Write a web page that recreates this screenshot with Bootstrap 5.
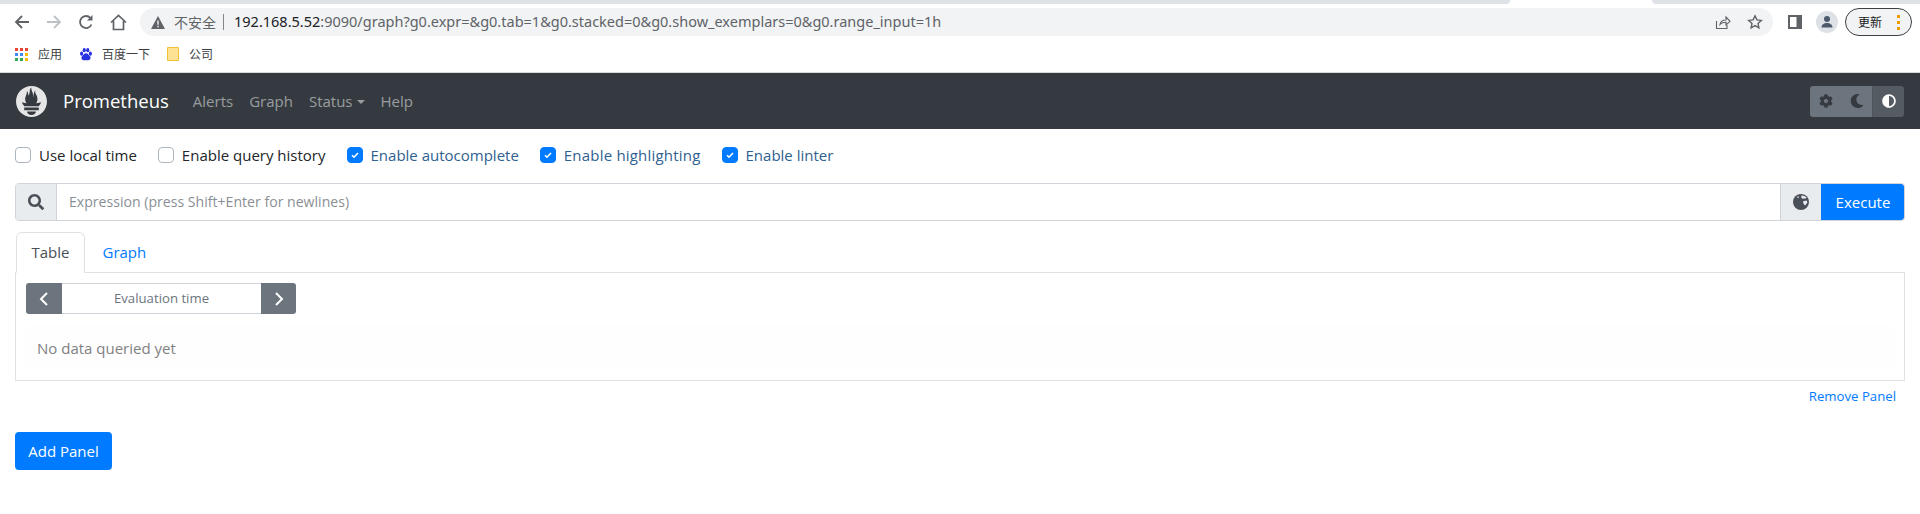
<!DOCTYPE html>
<html lang="zh-CN">
<head>
<meta charset="utf-8">
<title>Prometheus Time Series Collection and Processing Server</title>
<link href="https://cdn.jsdelivr.net/npm/bootstrap@5.3.0/dist/css/bootstrap.min.css" rel="stylesheet">
<style>
html,body{height:100%;}
body{font-family:"Open Sans","Noto Sans CJK SC",sans-serif;font-size:15px;color:#212529;background:#fff;overflow:hidden;}
.tabstrip{height:4px;background:#fff;}
.strip-left{width:1510px;background:#dee1e6;border-bottom-right-radius:4px;}
.strip-right{margin-left:142px;flex:1;background:#dee1e6;border-bottom-left-radius:4px;}
.toolbar{height:36px;padding:0 8px 0 6px;}
.tool-btn{width:32px;height:28px;flex:none;color:#5f6368;}
.omnibox{height:28px;width:1633px;background:#f1f3f4;border-radius:14px;margin-left:6px;flex:none;font-family:"Noto Sans","Noto Sans CJK SC",sans-serif;font-size:14.5px;color:#5f6368;padding:0 10px 0 11px;}
.omni-sep{width:1px;height:16px;background:#80868b;margin:0 10px 0 7px;}
.omni-host{color:#202124;}
.omni-warn{font-size:14px;margin-left:9px;font-family:"Noto Sans CJK SC",sans-serif;}
.update-pill{width:67px;height:28px;border:1px solid #3c4043;border-radius:14px;background:#f1f3f4;font-size:12px;font-family:"Noto Sans CJK SC",sans-serif;color:#202124;padding:0 11px 0 12px;margin-left:7px;}
.pill-dots{width:3px;height:15px;background:radial-gradient(circle at 1.5px 1.5px,#f29900 1.5px,transparent 2px) 0 0/3px 6px repeat-y;}
.avatar{width:22px;height:22px;border-radius:50%;background:#dee1e6;margin-left:14px;}
.marks{height:33px;padding:0 0 4px 15px;font-family:"Noto Sans CJK SC",sans-serif;font-size:12px;color:#3c4043;border-bottom:1px solid #d9d9d9;}
.mark-item{gap:10px;margin-right:17px;}
.mark-tight{gap:9px;}
.prom-nav.navbar{background:#343a40;height:56px;padding:0 16px;}
.prom-brand{color:#fff;font-size:18.5px;margin-left:16px;margin-right:24px;padding:0;}
.prom-brand:hover{color:#fff;}
.prom-link{color:rgba(255,255,255,.5);font-size:15px;padding:0;margin-right:16px;text-decoration:none;}
.prom-caret{display:inline-block;border-top:.3em solid;border-right:.3em solid transparent;border-left:.3em solid transparent;margin-left:4px;vertical-align:.2em;}
.theme-group{display:flex;height:31px;border-radius:3px;overflow:hidden;}
.theme-btn{width:31px;background:#6c757d;display:flex;align-items:center;justify-content:center;color:#343a40;}
.theme-btn.on{background:#545b62;color:#fff;width:32px;border-left:1px solid #4e555b;}
.opts{padding:15px 15px 0;height:54px;}
.opt{gap:8px;margin-right:21px;line-height:22px;}
.opt-box{width:16px;height:16px;border:1px solid #adb5bd;border-radius:4px;background:#fff;flex:none;display:flex;align-items:center;justify-content:center;}
.opt-box.on{background:#007bff;border-color:#007bff;}
.opt-on{color:#2f6190;}
.opt-wide{letter-spacing:.2px;}
.expr-row{margin:0 15px;height:38px;border:1px solid #ced4da;border-radius:4px;overflow:hidden;}
.expr-add{background:#e9ecef;width:41px;flex:none;display:flex;align-items:center;justify-content:center;border-right:1px solid #ced4da;color:#495057;}
.expr-input{flex:1;border:0;outline:0;padding:0 12px;font-size:14.1px;font-family:inherit;color:#495057;background:#fff;}
.expr-input::placeholder{color:#8a8f95;}
.expr-globe{background:#e9ecef;width:41px;flex:none;display:flex;align-items:center;justify-content:center;border-left:1px solid #ced4da;color:#495057;}
.expr-exec{background:#007bff;color:#fff;width:84px;flex:none;border:0;margin:-1px -1px -1px 0;font-size:15px;padding:0;}
.panel-tabs{margin:11px 15px 0;padding-left:1px;--bs-nav-tabs-border-color:#dee2e6;--bs-nav-link-color:#007bff;}
.panel-tabs .nav-link{height:41px;line-height:39px;padding:0 14.5px;font-size:15px;}
.panel-tabs .nav-link.active{color:#495057;}
.tab-second{margin-left:2px;}
.panel-body{margin:0 15px;height:108px;border:1px solid #dee2e6;border-top:0;padding:10px;}
.eval-group{display:flex;width:270px;height:31px;font-size:13.2px;}
.eval-btn{background:#6c757d;color:#fff;width:36px;flex:none;display:flex;align-items:center;justify-content:center;}
.eval-btn.l{border-radius:3px 0 0 3px;}
.eval-btn.r{border-radius:0 3px 3px 0;width:35px;}
.eval-field{flex:1;border:1px solid #ced4da;border-left:0;border-right:0;text-align:center;color:#6c757d;line-height:29px;}
.no-data{color:#818182;background:#fefefe;padding:12px 11px;margin-top:11px;height:45px;line-height:22px;}
.remove-row{margin:0 15px;height:33px;font-size:13.2px;padding:6px 9px 0 0;text-align:right;}
.remove-row a{color:#007bff;text-decoration:none;}
.add-btn{background:#007bff;color:#fff;border:0;border-radius:4px;height:38px;width:97px;margin:18px 0 0 15px;font-size:15px;padding:0;}
</style>
</head>
<body>
<div class="tabstrip d-flex"><div class="strip-left"></div><div class="strip-right"></div></div>

<div class="toolbar d-flex align-items-center">
  <div class="d-flex align-items-center">
    <div class="tool-btn d-flex align-items-center justify-content-center"><svg width="16" height="16" viewBox="0 0 16 16" fill="none" stroke="#5f6368" stroke-width="1.8"><path d="M15 8H2M8 2 2 8l6 6"/></svg></div>
    <div class="tool-btn d-flex align-items-center justify-content-center"><svg width="16" height="16" viewBox="0 0 16 16" fill="none" stroke="#bdc1c6" stroke-width="1.8"><path d="M1 8h13M8 2l6 6-6 6"/></svg></div>
    <div class="tool-btn d-flex align-items-center justify-content-center"><svg width="16" height="16" viewBox="0 0 16 16" fill="none" stroke="#5f6368" stroke-width="1.8"><path d="M13.5 10.500A6 6 0 1 1 12.500 4"/><path d="M14.500 1v5.500H9" fill="#5f6368" stroke="none"/></svg></div>
    <div class="tool-btn d-flex align-items-center justify-content-center"><svg width="17" height="17" viewBox="0 0 17 17" fill="none" stroke="#5f6368" stroke-width="1.7"><path d="M1 8.500 8.500 1.500l7.500 7M3.500 7v8.500h10V7"/></svg></div>
  </div>
  <div class="omnibox d-flex align-items-center">
    <svg width="14" height="13" viewBox="0 0 14 13"><path d="M7 0l7 13H0z" fill="#5f6368"/><path d="M6.300 4.500h1.400v4.300H6.300zM6.300 9.800h1.400v1.400H6.300z" fill="#f1f3f4"/></svg>
    <span class="omni-warn">不安全</span><span class="omni-sep"></span>
    <span><span class="omni-host">192.168.5.52</span>:9090/graph?g0.expr=&amp;g0.tab=1&amp;g0.stacked=0&amp;g0.show_exemplars=0&amp;g0.range_input=1h</span>
    <div class="ms-auto d-flex align-items-center gap-3">
      <svg width="16" height="16" viewBox="0 0 16 16" fill="none" stroke="#5f6368" stroke-width="1.1"><path d="M1.500 7v7.500h10.500V11"/><path d="M5 10.500c.5-3 3-4.500 6-4.500V3l4 4.300L11 11V8.300c-2.500 0-4.500.5-6 2.200z"/></svg>
      <svg width="16" height="16" viewBox="0 0 16 16" fill="none" stroke="#5f6368" stroke-width="1.4"><path d="M8 1.800l1.900 4.100 4.400.5-3.300 3 .9 4.400L8 11.600l-3.900 2.200.9-4.400-3.300-3 4.400-.5z"/></svg>
    </div>
  </div>
  <div class="d-flex align-items-center ms-auto">
    <svg width="14" height="14" viewBox="0 0 14 14"><path d="M0 0h14v14H0z" fill="#5f6368"/><path d="M2 2h6.500v10H2z" fill="#fff"/></svg>
    <div class="avatar d-flex align-items-center justify-content-center"><svg width="14" height="14" viewBox="0 0 14 14" fill="#4d5a6e"><circle cx="7" cy="4" r="3"/><path d="M1.500 12.500c0-3 2.500-4.500 5.500-4.500s5.500 1.500 5.500 4.500z"/></svg></div>
    <div class="update-pill d-flex align-items-center justify-content-between"><span>更新</span><span class="pill-dots"></span></div>
  </div>
</div>

<div class="marks d-flex align-items-center">
  <div class="mark-item d-flex align-items-center"><svg width="13" height="13" viewBox="0 0 13 13"><path d="M0 0h3v3H0z" fill="#ea4335"/><path d="M5 0h3v3H5z" fill="#ea4335"/><path d="M10 0h3v3h-3z" fill="#ea4335"/><path d="M0 5h3v3H0z" fill="#4285f4"/><path d="M5 5h3v3H5z" fill="#4285f4"/><path d="M10 5h3v3h-3z" fill="#fbbc04"/><path d="M0 10h3v3H0z" fill="#34a853"/><path d="M5 10h3v3H5z" fill="#34a853"/><path d="M10 10h3v3h-3z" fill="#fbbc04"/></svg><span>应用</span></div>
  <div class="mark-item mark-tight d-flex align-items-center"><svg width="14" height="15" viewBox="0 0 16 16" fill="#2932e1"><ellipse cx="3" cy="7" rx="1.800" ry="2.300"/><ellipse cx="6" cy="3" rx="1.800" ry="2.400"/><ellipse cx="10" cy="3" rx="1.800" ry="2.400"/><ellipse cx="13" cy="7" rx="1.800" ry="2.300"/><path d="M8 6.500c2 0 3 2 4.500 3.500s.5 4.500-2 4.500H5.500c-2.500 0-3.500-3-2-4.500S6 6.500 8 6.500z"/></svg><span>百度一下</span></div>
  <div class="mark-item d-flex align-items-center"><svg width="12" height="14" viewBox="0 0 12 14"><path d="M.5.500h11v13H.5z" fill="#fde293" stroke="#f0c036"/></svg><span>公司</span></div>
</div>

<nav class="navbar prom-nav d-flex flex-nowrap justify-content-start">
  <svg width="31" height="31" viewBox="0 0 24 24" fill="#e6e6e6"><path d="M12 0C5.373 0 0 5.372 0 12c0 6.627 5.373 12 12 12s12-5.373 12-12c0-6.628-5.373-12-12-12zm0 22.460c-1.885 0-3.414-1.260-3.414-2.814h6.828c0 1.553-1.528 2.813-3.414 2.813zm5.640-3.745H6.360v-2.046h11.280v2.046zm-.04-3.098H6.391c-.037-.043-.075-.086-.111-.13-1.155-1.401-1.427-2.133-1.690-2.879-.005-.025 1.400.287 2.395.511 0 0 .513.119 1.262.255-.720-.843-1.147-1.915-1.147-3.010 0-2.406 1.845-4.508 1.180-6.207.648.053 1.340 1.367 1.387 3.422.689-.951.977-2.690.977-3.755 0-1.103.727-2.385 1.454-2.429-.648 1.069.168 1.984.894 4.256.272.854.237 2.290.447 3.201.070-1.892.395-4.652 1.595-5.605-.529 1.200.079 2.702.494 3.424.671 1.164 1.078 2.047 1.078 3.716a4.642 4.642 0 0 1-1.110 2.996c.792-.149 1.336-.284 1.336-.284l2.573-.502s-.374 1.538-1.810 3.020z"/></svg>
  <a class="navbar-brand prom-brand" href="#">Prometheus</a>
  <a class="prom-link" href="#">Alerts</a>
  <a class="prom-link" href="#">Graph</a>
  <a class="prom-link" href="#">Status<span class="prom-caret"></span></a>
  <a class="prom-link" href="#">Help</a>
  <div class="theme-group ms-auto">
    <div class="theme-btn"><svg width="14" height="14" viewBox="0 0 512 512" fill="currentColor"><path d="M487.400 315.700l-42.600-24.600c4.300-23.200 4.300-47 0-70.200l42.600-24.600c4.900-2.800 7.100-8.600 5.500-14-11.100-35.600-30-67.800-54.700-94.600-3.800-4.100-10-5.100-14.800-2.300L380.800 110c-17.900-15.400-38.500-27.300-60.800-35.100V25.800c0-5.600-3.900-10.500-9.400-11.700-36.700-8.200-74.300-7.800-109.200 0-5.500 1.200-9.400 6.100-9.400 11.700V75c-22.200 7.900-42.800 19.800-60.800 35.100L88.700 85.500c-4.900-2.800-11-1.900-14.800 2.300-24.700 26.700-43.600 58.900-54.700 94.600-1.700 5.400.6 11.200 5.500 14L67.300 221c-4.300 23.200-4.300 47 0 70.200l-42.600 24.600c-4.900 2.800-7.100 8.600-5.500 14 11.100 35.600 30 67.800 54.700 94.600 3.800 4.100 10 5.100 14.800 2.300l42.600-24.600c17.900 15.400 38.500 27.300 60.800 35.100v49.200c0 5.600 3.900 10.500 9.400 11.700 36.700 8.200 74.300 7.800 109.200 0 5.500-1.200 9.400-6.100 9.400-11.700v-49.200c22.200-7.900 42.800-19.800 60.800-35.100l42.600 24.600c4.900 2.800 11 1.900 14.800-2.300 24.700-26.700 43.600-58.900 54.700-94.600 1.500-5.500-.7-11.300-5.600-14.100zM256 336c-44.100 0-80-35.900-80-80s35.900-80 80-80 80 35.900 80 80-35.900 80-80 80z"/></svg></div>
    <div class="theme-btn"><svg width="14" height="14" viewBox="0 0 512 512" fill="currentColor"><path d="M283.211 512c78.962 0 151.079-35.925 198.857-94.792 7.068-8.708-.639-21.430-11.562-19.350-124.203 23.654-238.262-71.576-238.262-196.954 0-72.222 38.662-138.635 101.498-174.394 9.686-5.512 7.250-20.197-3.756-22.230A258.156 258.156 0 0 0 283.211 0c-141.309 0-256 114.511-256 256 0 141.309 114.511 256 256 256z"/></svg></div>
    <div class="theme-btn on"><svg width="14" height="14" viewBox="0 0 512 512" fill="currentColor"><path d="M8 256c0 136.966 111.033 248 248 248s248-111.034 248-248S392.966 8 256 8 8 119.033 8 256zm248 184V72c101.705 0 184 82.311 184 184 0 101.705-82.311 184-184 184z"/></svg></div>
  </div>
</nav>

<div class="opts d-flex align-items-start">
  <label class="opt d-flex align-items-center"><span class="opt-box"></span>Use local time</label>
  <label class="opt d-flex align-items-center"><span class="opt-box"></span>Enable query history</label>
  <label class="opt opt-on d-flex align-items-center"><span class="opt-box on"><svg width="8" height="8" viewBox="0 0 8 8"><path d="M1 4.200l2 2L7 2" fill="none" stroke="#fff" stroke-width="1.600"/></svg></span>Enable autocomplete</label>
  <label class="opt opt-on opt-wide d-flex align-items-center"><span class="opt-box on"><svg width="8" height="8" viewBox="0 0 8 8"><path d="M1 4.200l2 2L7 2" fill="none" stroke="#fff" stroke-width="1.600"/></svg></span>Enable highlighting</label>
  <label class="opt opt-on d-flex align-items-center"><span class="opt-box on"><svg width="8" height="8" viewBox="0 0 8 8"><path d="M1 4.200l2 2L7 2" fill="none" stroke="#fff" stroke-width="1.600"/></svg></span>Enable linter</label>
</div>

<div class="expr-row d-flex">
  <div class="expr-add"><svg width="16" height="16" viewBox="0 0 512 512" fill="currentColor"><path d="M505 442.700L405.300 343c-4.500-4.500-10.600-7-17-7H372c27.600-35.300 44-79.700 44-128C416 93.100 322.900 0 208 0S0 93.100 0 208s93.100 208 208 208c48.300 0 92.700-16.400 128-44v16.300c0 6.400 2.500 12.500 7 17l99.700 99.700c9.400 9.400 24.600 9.400 33.900 0l28.300-28.300c9.400-9.400 9.400-24.600.1-34zM208 336c-70.700 0-128-57.200-128-128 0-70.700 57.200-128 128-128 70.700 0 128 57.200 128 128 0 70.700-57.200 128-128 128z"/></svg></div>
  <input class="expr-input" placeholder="Expression (press Shift+Enter for newlines)">
  <div class="expr-globe"><svg width="16" height="16" viewBox="0 0 16 16"><circle cx="8" cy="8" r="8" fill="#495057"/><path d="M8.500 1.500c2-.3 4 .8 5.200 2.300l-1.700.9-1.200-.5-.8.900-1.700-1.300zM10 7.200l3.700-.6.700 1.800-2.300 3-1.500-1.500zM4 2.800l1.500-.6.500 1.300-1.300.6z" fill="#e9ecef"/></svg></div>
  <button class="expr-exec rounded-end" type="button">Execute</button>
</div>

<ul class="nav nav-tabs panel-tabs">
  <li class="nav-item"><a class="nav-link active" href="#">Table</a></li>
  <li class="nav-item tab-second"><a class="nav-link" href="#">Graph</a></li>
</ul>
<div class="panel-body">
  <div class="eval-group">
    <div class="eval-btn l"><svg width="10" height="14" viewBox="0 0 10 14" fill="none" stroke="#fff" stroke-width="2"><path d="M8 1 2 7l6 6"/></svg></div>
    <div class="eval-field">Evaluation time</div>
    <div class="eval-btn r"><svg width="10" height="14" viewBox="0 0 10 14" fill="none" stroke="#fff" stroke-width="2"><path d="M2 1l6 6-6 6"/></svg></div>
  </div>
  <div class="no-data">No data queried yet</div>
</div>
<div class="remove-row"><a href="#">Remove Panel</a></div>
<button class="add-btn" type="button">Add Panel</button>
<script src="https://cdn.jsdelivr.net/npm/bootstrap@5.3.0/dist/js/bootstrap.bundle.min.js"></script>
</body>
</html>
